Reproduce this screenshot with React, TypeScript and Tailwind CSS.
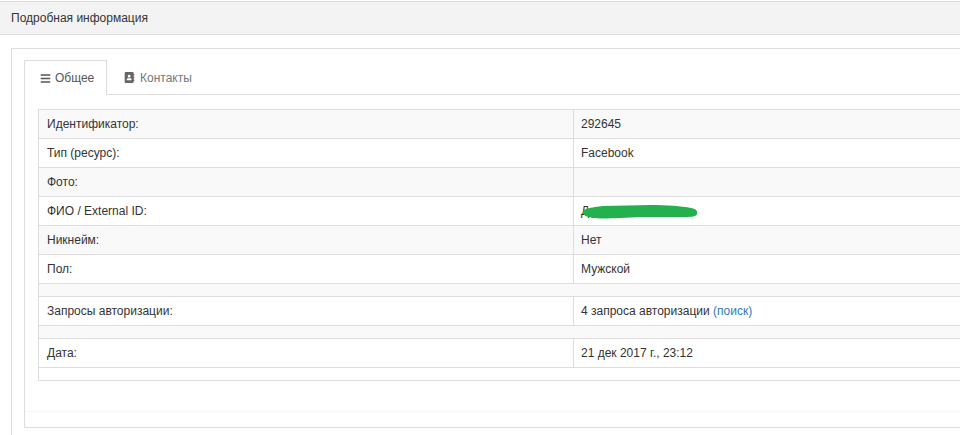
import { FaAddressBook, FaBars } from "react-icons/fa";
import type { ReactNode } from "react";

interface RowProps {
  label: string;
  value?: ReactNode;
  striped?: boolean;
}

function Row({ label, value, striped = false }: RowProps) {
  return (
    <div className={`flex h-[29px] border-b border-[#ddd] ${striped ? "bg-[#f9f9f9]" : ""}`}>
      <div className="w-[535px] shrink-0 border-r border-[#ddd] pl-[8px] leading-[28px]">{label}</div>
      <div className="relative pl-[7px] leading-[28px]">{value}</div>
    </div>
  );
}

function Spacer({ striped = false }: { striped?: boolean }) {
  return <div className={`h-[13px] border-b border-[#ddd] ${striped ? "bg-[#f9f9f9]" : ""}`} />;
}

function Scribble() {
  return (
    <svg className="absolute left-[7px] top-[6px]" width="118" height="18" viewBox="0 0 118 18">
      <path
        d="M2 9 C3 6 8 5 14 4 L22 3 L70 2 C86 2 100 3 110 5 C116 6 117 9 116 11 C115 14 110 14 100 14 L60 14 C40 15 20 16 12 15 C6 14 1 12 2 9 Z"
        fill="#22b14c"
      />
    </svg>
  );
}

export default function App() {
  return (
    <div className="h-[435px] w-[960px] overflow-hidden bg-white pt-px font-['Liberation_Sans',Arial,sans-serif] text-[12px] text-[#333]">
      <div className="h-[34px] border-y border-[#ddd] bg-[#f3f3f3] pl-[11px] leading-[32px]">Подробная информация</div>

      <div className="mt-[13px] ml-[11px] h-[400px] border-t border-l border-[#ddd] pt-[12px] pl-[12px]">
        <div className="h-[367px] border-b border-l border-[#ddd]">
          <div className="flex h-[34px] border-b border-[#ddd]">
            <div className="-mt-px -ml-px flex h-[35px] w-[83px] items-center gap-[4px] border-x border-t border-[#ddd] bg-white pl-[15px] text-[#555]">
              <FaBars className="h-[11px] w-[11px]" />
              <span>Общее</span>
            </div>
            <div className="flex items-center gap-[5px] pl-[17px] text-[#777]">
              <FaAddressBook className="h-[11px] w-[11px] text-[#666]" />
              <span>Контакты</span>
            </div>
          </div>

          <div className="mt-[14px] ml-[13px] border-t border-l border-[#ddd]">
            <Row label="Идентификатор:" value="292645" striped />
            <Row label="Тип (ресурс):" value="Facebook" />
            <Row label="Фото:" striped />
            <Row
              label="ФИО / External ID:"
              value={
                <>
                  Д
                  <Scribble />
                </>
              }
            />
            <Row label="Никнейм:" value="Нет" striped />
            <Row label="Пол:" value="Мужской" />
            <Spacer striped />
            <Row
              label="Запросы авторизации:"
              value={
                <>
                  4 запроса авторизации <span className="text-[#337ab7]">(поиск)</span>
                </>
              }
            />
            <Spacer striped />
            <Row label="Дата:" value="21 дек 2017 г., 23:12" />
            <Spacer />
          </div>

          <div className="mt-[30px] border-t border-[#f7f7f7]" />
        </div>
      </div>
    </div>
  );
}
